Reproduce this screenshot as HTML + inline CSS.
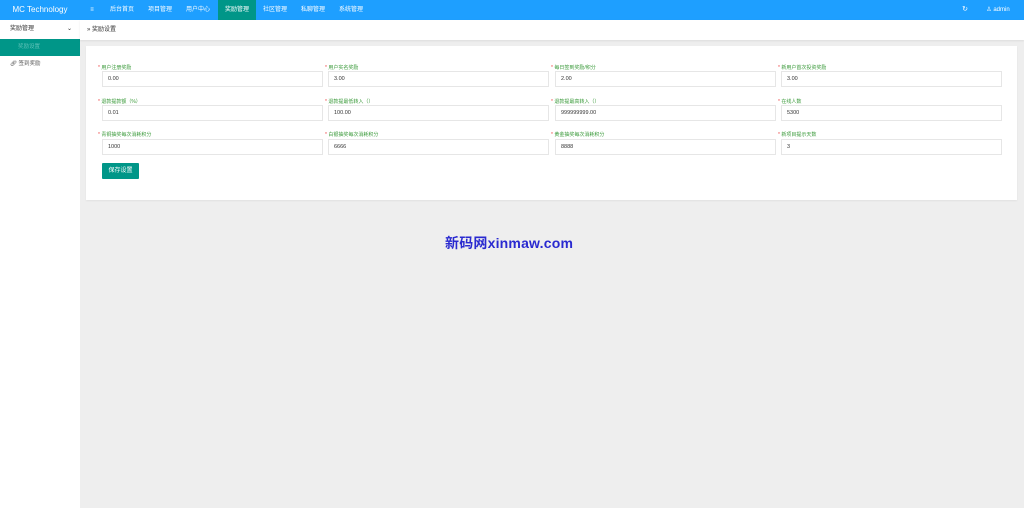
<!DOCTYPE html>
<html><head><meta charset="utf-8"><style>
*{margin:0;padding:0;box-sizing:border-box}
body{width:1024px;height:508px;background:#eeeeee;font-family:"Liberation Sans","Noto Sans CJK SC",sans-serif;position:relative;overflow:hidden;font-size:6px;color:#333}
.hd{position:absolute;left:0;top:0;width:1024px;height:20px;background:#1e9fff;color:#fff}
.logo{position:absolute;left:0;top:0;width:80px;height:20px;line-height:20px;text-align:center;font-size:8px}
.nav{position:absolute;top:0;height:20px;line-height:20px;font-size:6px;text-align:center}
.act{background:#009688}
.sd{position:absolute;left:0;top:20px;width:80px;height:488px;background:#fff}
.bc{position:absolute;left:80px;top:20px;width:944px;height:20px;background:#fff;box-shadow:0 1px 2px rgba(0,0,0,.08);line-height:20px;padding-left:7px;font-size:6px}
.card{position:absolute;left:86px;top:46px;width:931px;height:154px;background:#fff;box-shadow:0 1px 2px rgba(0,0,0,.06)}
.lb{position:absolute;font-size:5px;color:#3a9a3a}
.lb:before{content:"* ";color:#e44}
.in{position:absolute;height:16px;border:1px solid #e6e6e6;line-height:14px;padding-left:5px;font-size:5.5px;color:#333;background:#fff}
.btn{position:absolute;left:102px;top:163px;width:37px;height:16px;background:#009688;color:#fff;font-size:6px;line-height:16px;text-align:center;border-radius:1px}
.wm{position:absolute;left:445px;top:233px;font-size:14px;font-weight:bold;color:#2a2ad0;font-family:"Liberation Sans","Noto Sans CJK SC",sans-serif;letter-spacing:0.2px}
</style></head><body>
<div class="hd">
<div class="logo">MC Technology</div>
<div class="nav" style="left:84px;width:16px">≡</div>
<div class="nav" style="left:104px;width:36px">后台首页</div>
<div class="nav" style="left:142px;width:36px">项目管理</div>
<div class="nav" style="left:180px;width:36px">用户中心</div>
<div class="nav act" style="left:218px;width:38px">奖励管理</div>
<div class="nav" style="left:257px;width:36px">社区管理</div>
<div class="nav" style="left:295px;width:36px">私聊管理</div>
<div class="nav" style="left:333px;width:36px">系统管理</div>
<div class="nav" style="left:955px;width:20px;font-size:7px">↻</div>
<div class="nav" style="left:978px;width:40px">♙ admin</div>
</div>
<div class="sd">
<div style="height:19px;line-height:19px;padding-left:10px;font-size:6px">奖励管理<span style="position:absolute;left:67px">⌄</span></div>
<div style="height:17px;background:#009688;color:#5fc2b8;line-height:17px;padding-left:18px;font-size:5.5px">奖励设置</div>
<div style="height:17px;line-height:17px;padding-left:10px;font-size:5.5px;color:#555">🔗︎ 签到奖励</div>
</div>
<div class="bc">» 奖励设置</div>
<div class="card"></div>
<div class="lb" style="left:98px;top:64px">用户注册奖励</div>
<div class="lb" style="left:325px;top:64px">用户实名奖励</div>
<div class="lb" style="left:551px;top:64px">每日签到奖励/积分</div>
<div class="lb" style="left:778px;top:64px">新用户首次投资奖励</div>
<div class="in" style="left:102px;top:71px;width:221px">0.00</div>
<div class="in" style="left:328px;top:71px;width:221px">3.00</div>
<div class="in" style="left:555px;top:71px;width:221px">2.00</div>
<div class="in" style="left:781px;top:71px;width:221px">3.00</div>
<div class="lb" style="left:98px;top:98px">退款提款额（%）</div>
<div class="lb" style="left:325px;top:98px">退款提最低转入（）</div>
<div class="lb" style="left:551px;top:98px">退款提最高转入（）</div>
<div class="lb" style="left:778px;top:98px">在线人数</div>
<div class="in" style="left:102px;top:105px;width:221px">0.01</div>
<div class="in" style="left:328px;top:105px;width:221px">100.00</div>
<div class="in" style="left:555px;top:105px;width:221px">999999999.00</div>
<div class="in" style="left:781px;top:105px;width:221px">5300</div>
<div class="lb" style="left:98px;top:131px">青铜抽奖每次消耗积分</div>
<div class="lb" style="left:325px;top:131px">白银抽奖每次消耗积分</div>
<div class="lb" style="left:551px;top:131px">黄金抽奖每次消耗积分</div>
<div class="lb" style="left:778px;top:131px">新项目提示天数</div>
<div class="in" style="left:102px;top:139px;width:221px">1000</div>
<div class="in" style="left:328px;top:139px;width:221px">6666</div>
<div class="in" style="left:555px;top:139px;width:221px">8888</div>
<div class="in" style="left:781px;top:139px;width:221px">3</div>
<div class="btn">保存设置</div>
<div class="wm">新码网xinmaw.com</div>
</body></html>
